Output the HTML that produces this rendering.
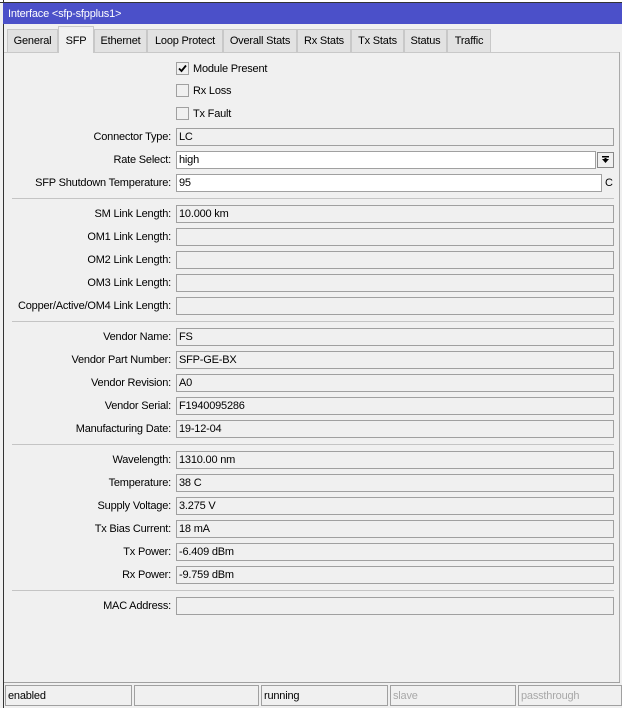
<!DOCTYPE html>
<html><head><style>
*{margin:0;padding:0;box-sizing:border-box}
body{width:622px;height:708px;background:#f0f0f0;font-family:"Liberation Sans",sans-serif;font-size:11px;letter-spacing:-0.2px;color:#000;position:relative;overflow:hidden}
.abs{position:absolute;white-space:nowrap}
.title{left:3px;top:3px;width:619px;height:21px;background:#4b50c9;color:#fff;line-height:22px;padding-left:5px}
.frame{left:3px;top:0;width:1px;height:708px;background:#333}
.topl{left:0;top:0;width:622px;height:3px;background:#fff;border-bottom:1px solid #333}
.tab{top:29px;height:23px;background:#e2e2e2;border:1px solid #c8c8c8;border-bottom:none;line-height:23px;text-align:center}
.tab.sel{top:26px;height:27px;background:#f0f0f0;line-height:29px}
.line{left:4px;top:52px;width:616px;height:1px;background:#c8c8c8}
.rb{left:619px;top:52px;width:1px;height:630px;background:#aaa}
.lbl{right:451px;width:170px;text-align:right;height:18px;line-height:19px}
.f{left:176px;width:438px;height:18px;border:1px solid #a0a0a0;background:#f0f0f0;line-height:17px;padding-left:2px}
.w{background:#fff}
.sep{left:12px;width:602px;height:1px;background:#c4c4c4}
.cb{left:176px;width:13px;height:13px;border:1px solid #a0a0a0;background:#f0f0f0}
.cbt{left:193px;line-height:14px}
.st{top:685px;height:21px;border:1px solid #a0a0a0;line-height:20px;padding-left:2px}
</style></head><body>
<div class="abs topl"></div>
<div class="abs frame"></div>
<div class="abs title">Interface &lt;sfp-sfpplus1&gt;</div>
<div class="abs tab" style="left:7px;width:51px">General</div>
<div class="abs tab" style="left:94px;width:53px">Ethernet</div>
<div class="abs tab" style="left:147px;width:76px">Loop Protect</div>
<div class="abs tab" style="left:223px;width:74px">Overall Stats</div>
<div class="abs tab" style="left:297px;width:54px">Rx Stats</div>
<div class="abs tab" style="left:351px;width:53px">Tx Stats</div>
<div class="abs tab" style="left:404px;width:43px">Status</div>
<div class="abs tab" style="left:447px;width:44px">Traffic</div>
<div class="abs line"></div>
<div class="abs tab sel" style="left:58px;width:36px">SFP</div>
<div class="abs rb"></div>
<div class="abs cb" style="top:62px"><svg width="11" height="11" viewBox="0 0 11 11"><path d="M2 5.5 L4.5 8 L9 2.5" stroke="#000" stroke-width="1.8" fill="none"/></svg></div><div class="abs cbt" style="top:62px">Module Present</div>
<div class="abs cb" style="top:84px"></div><div class="abs cbt" style="top:84px">Rx Loss</div>
<div class="abs cb" style="top:107px"></div><div class="abs cbt" style="top:107px">Tx Fault</div>

<div class="abs lbl" style="top:128px">Connector Type:</div><div class="abs f" style="top:128px">LC</div>
<div class="abs lbl" style="top:151px">Rate Select:</div><div class="abs f w" style="top:151px;width:420px">high</div>
<div class="abs" style="left:597px;top:152px;width:17px;height:16px;border:1px solid #888;background:#f0f0f0"><svg width="15" height="14" viewBox="0 0 15 14"><rect x="4" y="3" width="7" height="1.5" fill="#000"/><path d="M4 6 H11 L7.5 10 Z" fill="#000"/><rect x="6.5" y="5" width="2" height="2" fill="#000"/></svg></div>
<div class="abs lbl" style="top:174px">SFP Shutdown Temperature:</div><div class="abs f w" style="top:174px;width:426px">95</div><div class="abs" style="left:605px;top:177px">C</div>
<div class="abs sep" style="top:198px"></div>
<div class="abs lbl" style="top:205px">SM Link Length:</div><div class="abs f" style="top:205px">10.000 km</div>
<div class="abs lbl" style="top:228px">OM1 Link Length:</div><div class="abs f" style="top:228px"></div>
<div class="abs lbl" style="top:251px">OM2 Link Length:</div><div class="abs f" style="top:251px"></div>
<div class="abs lbl" style="top:274px">OM3 Link Length:</div><div class="abs f" style="top:274px"></div>
<div class="abs lbl" style="top:297px">Copper/Active/OM4 Link Length:</div><div class="abs f" style="top:297px"></div>
<div class="abs sep" style="top:321px"></div>
<div class="abs lbl" style="top:328px">Vendor Name:</div><div class="abs f" style="top:328px">FS</div>
<div class="abs lbl" style="top:351px">Vendor Part Number:</div><div class="abs f" style="top:351px">SFP-GE-BX</div>
<div class="abs lbl" style="top:374px">Vendor Revision:</div><div class="abs f" style="top:374px">A0</div>
<div class="abs lbl" style="top:397px">Vendor Serial:</div><div class="abs f" style="top:397px">F1940095286</div>
<div class="abs lbl" style="top:420px">Manufacturing Date:</div><div class="abs f" style="top:420px">19-12-04</div>
<div class="abs sep" style="top:444px"></div>
<div class="abs lbl" style="top:451px">Wavelength:</div><div class="abs f" style="top:451px">1310.00 nm</div>
<div class="abs lbl" style="top:474px">Temperature:</div><div class="abs f" style="top:474px">38 C</div>
<div class="abs lbl" style="top:497px">Supply Voltage:</div><div class="abs f" style="top:497px">3.275 V</div>
<div class="abs lbl" style="top:520px">Tx Bias Current:</div><div class="abs f" style="top:520px">18 mA</div>
<div class="abs lbl" style="top:543px">Tx Power:</div><div class="abs f" style="top:543px">-6.409 dBm</div>
<div class="abs lbl" style="top:566px">Rx Power:</div><div class="abs f" style="top:566px">-9.759 dBm</div>
<div class="abs sep" style="top:590px"></div>
<div class="abs lbl" style="top:597px">MAC Address:</div><div class="abs f" style="top:597px"></div>
<div class="abs" style="left:4px;top:682px;width:616px;height:1px;background:#a0a0a0"></div>
<div class="abs st" style="left:5px;width:127px">enabled</div>
<div class="abs st" style="left:134px;width:125px"></div>
<div class="abs st" style="left:261px;width:127px">running</div>
<div class="abs st" style="left:390px;width:126px;color:#a8a8a8">slave</div>
<div class="abs st" style="left:518px;width:104px;color:#a8a8a8">passthrough</div>
</body></html>
